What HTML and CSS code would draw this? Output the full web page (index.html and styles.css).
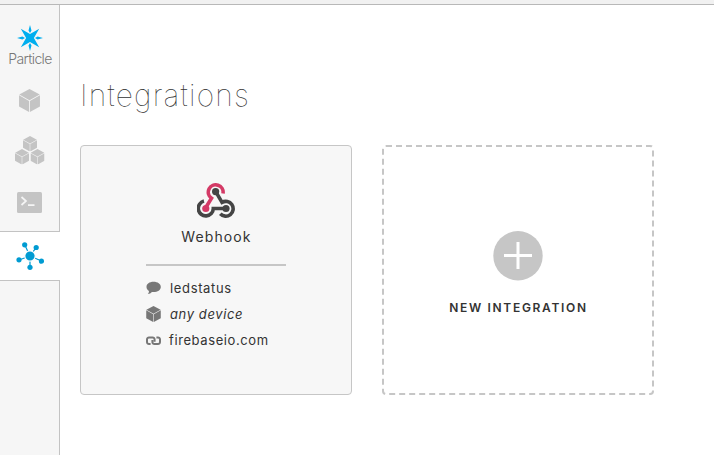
FILE: index.html
```html
<!DOCTYPE html>
<html lang="en">
<head>
<meta charset="utf-8">
<title>Integrations</title>
<link rel="stylesheet" href="styles.css">
</head>
<body>
<svg width="0" height="0" class="defs" aria-hidden="true">
  <symbol id="cube" viewBox="0 0 20 22">
    <path fill="currentColor" d="M10 0 19.8 5.3 10 10.7.2 5.3zM0 6 9.6 11.4V22L0 16.8zM20 6 10.4 11.4V22L20 16.8z"/>
  </symbol>
</svg>
<div class="topbar"></div>
<div class="app">
  <nav class="sidebar">
    <a class="logo">
      <svg width="26" height="26" viewBox="-13 -13 26 26" fill="#00aeef">
        <path d="M-9.2-9.2 0-3.9 9.2-9.2 3.9 0 9.2 9.2 0 3.9-9.2 9.2-3.9 0z"/>
        <path d="M0-13 1.5-7.6 0-5-1.5-7.6zM0 13 1.5 7.6 0 5-1.5 7.6zM-13 0-7.6-1.5-5 0-7.6 1.5zM13 0 7.6-1.5 5 0 7.6 1.5z"/>
      </svg>
      <span class="brand">Particle</span>
    </a>
    <a class="item"><svg width="21" height="23"><use href="#cube"/></svg></a>
    <a class="item"><svg width="30" height="29">
      <use href="#cube" x="8" width="14" height="15.4"/>
      <use href="#cube" y="13" width="14" height="15.4"/>
      <use href="#cube" x="15.5" y="13" width="14" height="15.4"/>
    </svg></a>
    <a class="item console"><svg width="25" height="21" viewBox="0 0 25 21">
      <rect width="25" height="21" rx="1.5" fill="currentColor"/>
      <path d="M4.5 5 9 9 4.5 13M11 13.2h6.5" fill="none" stroke="#f5f5f5" stroke-width="1.7"/>
    </svg></a>
    <a class="item active"><svg width="28" height="28" viewBox="0 0 28 28">
      <path d="M14 14 8.7 2.7M14 14l6.2-8.6M14 14 3 18M14 14l11.5 5M14 14v11.3" stroke="currentColor" stroke-width="1.2"/>
      <g fill="currentColor">
        <circle cx="8.7" cy="2.8" r="2.6"/><circle cx="20.2" cy="5.5" r="2.6"/><circle cx="3" cy="17.8" r="2.6"/><circle cx="25.5" cy="19.2" r="2.6"/><circle cx="14" cy="25.3" r="2.6"/>
        <circle cx="14" cy="14" r="5.2" stroke="#fff" stroke-width="1.2"/>
      </g>
    </svg></a>
  </nav>
  <main>
    <h1>Integrations</h1>
    <div class="cards">
      <section class="card">
        <svg class="hook" width="38" height="35" viewBox="0 0 38 35" fill="none" stroke-width="3.6">
          <path stroke="#d43a66" d="M8.8 24.5 14.5 15.3A7.4 7.4 0 1 1 26 10.5"/>
          <path stroke="#454545" d="M18.6 8.3 25 19.4A7.4 7.4 0 1 1 23.3 30.8"/>
          <path stroke="#454545" d="M29 25.5H16.3A7.5 7.5 0 1 1 7 18.1"/>
          <circle cx="18.6" cy="8.6" r="3.6" fill="#454545"/><circle cx="8.8" cy="25.5" r="3.6" fill="#d43a66"/><circle cx="29" cy="25.5" r="3.6" fill="#454545"/>
        </svg>
        <div class="name">Webhook</div>
        <div class="details">
          <div class="row"><svg width="15" height="14" viewBox="0 0 15 14"><path fill="currentColor" d="M7.5.8C3.4.8.5 3 .5 5.9c0 1.7 1 3.1 2.5 4 0 1.2-.4 2.2-1.2 3.2 1.7-.2 3.1-.9 4.1-2.1 5 .6 8.9-1.7 8.9-5.1 0-2.9-3.1-5.1-7.3-5.1z"/></svg><span class="event">ledstatus</span></div>
          <div class="row"><svg width="15" height="16"><use href="#cube"/></svg><span class="device">any device</span></div>
          <div class="row"><svg class="link" width="15" height="10" viewBox="0 0 15 10" fill="none" stroke="currentColor" stroke-width="2"><path d="M4.6 8H3.1A2 2 0 0 1 1 6V3.5a2 2 0 0 1 2.1-2h3.4a2 2 0 0 1 2.1 2V5.8M10.4 1.5h1.5A2 2 0 0 1 14 3.5V6a2 2 0 0 1-2.1 2H8.5a2 2 0 0 1-2.1-2V4"/></svg><span class="host">firebaseio.com</span></div>
        </div>
      </section>
      <section class="card new">
        <svg width="50" height="50" viewBox="0 0 50 50"><circle cx="25" cy="24.7" r="24.7" fill="#c6c6c6"/><path d="M11 24.5h28M25 11v27" stroke="#fff" stroke-width="3"/></svg>
        <div class="cta">NEW INTEGRATION</div>
      </section>
    </div>
  </main>
</div>
</body>
</html>
```
FILE: styles.css
```css
* { box-sizing: border-box; }
body { margin: 0; height: 455px; overflow: hidden; background: #fff; color: #333; font-family: Inter, "Liberation Sans", sans-serif; }
svg { display: block; flex: none; }
.defs { display: none; }
.topbar { height: 5px; background: #f1f1f1; border-bottom: 1px solid #b8b8b8; }
.app { display: flex; height: 450px; }
.sidebar { width: 60px; flex: none; display: flex; flex-direction: column; background: linear-gradient(to right, #f6f6f6 59px, #c3c3c3 59px); color: #c4c4c4; }
.logo { height: 70px; padding-top: 20px; display: flex; flex-direction: column; align-items: center; }
.brand { font-size: 14px; font-weight: 300; line-height: 16px; letter-spacing: -0.6px; color: #777; }
.item { height: 50px; display: flex; align-items: center; justify-content: center; padding-right: 1px; }
.console { height: 56px; padding-bottom: 2px; }
.active { background: #fff; color: #009bd2; border-top: 1px solid #c3c3c3; border-bottom: 1px solid #c3c3c3; padding-bottom: 1px; }
main { padding: 70px 0 0 20px; }
h1 { margin: 0; height: 70px; font-size: 30px; line-height: 40px; font-weight: 100; letter-spacing: 1.2px; }
.cards { display: flex; gap: 30px; }
.card { width: 272px; height: 250px; border: 1px solid #c6c6c6; border-radius: 4px; background: #f7f7f7; display: flex; flex-direction: column; align-items: center; padding-top: 37px; }
.name { margin-top: 9px; font-size: 14px; line-height: 20px; letter-spacing: 1.1px; padding-left: 1px; }
.details { width: 140px; margin-top: 17px; border-top: 2px solid #c6c6c6; padding-top: 9px; }
.row { height: 26px; display: flex; align-items: center; gap: 9px; color: #777; font-size: 13px; }
.row span { color: #333; white-space: nowrap; letter-spacing: 0.6px; }
.row .event { letter-spacing: 0.65px; }
.row .device { font-style: italic; }
.row .host { margin-left: -1px; }
.row .link { margin-top: 2px; }
.new { border: 2px dashed #c6c6c6; background: #fff; padding-top: 84px; }
.cta { margin-top: 17px; font-size: 12px; line-height: 20px; font-weight: 600; letter-spacing: 1.68px; padding-left: 1px; }
```
